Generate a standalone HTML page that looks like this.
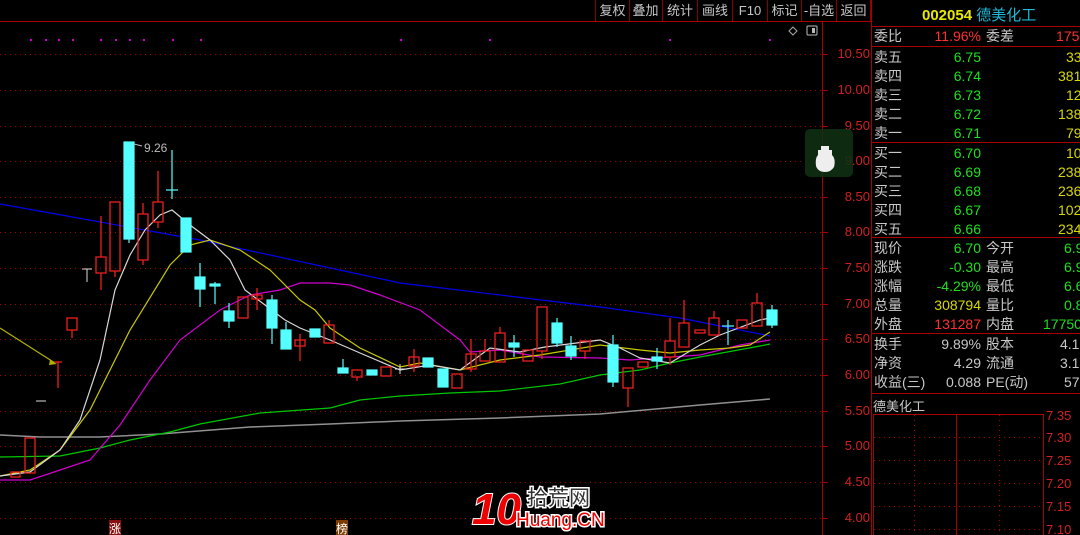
<!DOCTYPE html>
<html><head><meta charset="utf-8"><style>
body{margin:0;background:#000;width:1080px;height:535px;overflow:hidden;position:relative;font-family:"Liberation Sans","Noto Sans CJK SC",sans-serif}
.tb{position:absolute;top:0;height:21px;border-right:1px solid #800;color:#c8c8c8;font-size:13px;line-height:22px;text-align:center}
.ax{position:absolute;left:834px;color:#d02020;font-size:13px;width:36px;text-align:right}
.rp{position:absolute;left:871px;top:0;width:209px;height:535px;border-left:1px solid #a00;overflow:hidden}
.r{position:absolute;left:2px;height:19px;font-size:14px;line-height:19px;white-space:nowrap;width:300px}
.r span{position:absolute}
.l1{left:0;color:#c8c8c8}.v1{right:193px;text-align:right}.l2{left:112px;color:#c8c8c8}.v2{left:176px}
.hl{position:absolute;left:0;width:209px;height:1px;background:#a00}
.g{color:#1ee01e}.y{color:#d8d800}.rd{color:#ff3030}.w{color:#c8c8c8}
</style></head><body>
<div style="position:absolute;left:0;top:21px;width:871px;height:1px;background:#a00"></div>
<div class="tb" style="left:595px;width:33px;border-left:1px solid #800">复权</div>
<div class="tb" style="left:629px;width:33px">叠加</div>
<div class="tb" style="left:663px;width:34px">统计</div>
<div class="tb" style="left:698px;width:34px">画线</div>
<div class="tb" style="left:733px;width:34px">F10</div>
<div class="tb" style="left:768px;width:33px">标记</div>
<div class="tb" style="left:802px;width:34px">-自选</div>
<div class="tb" style="left:837px;width:33px">返回</div>
<div class="ax" style="top:46px">10.50</div><div class="ax" style="top:82px">10.00</div><div class="ax" style="top:118px">9.50</div><div class="ax" style="top:153px">9.00</div><div class="ax" style="top:189px">8.50</div><div class="ax" style="top:224px">8.00</div><div class="ax" style="top:260px">7.50</div><div class="ax" style="top:296px">7.00</div><div class="ax" style="top:331px">6.50</div><div class="ax" style="top:367px">6.00</div><div class="ax" style="top:403px">5.50</div><div class="ax" style="top:438px">5.00</div><div class="ax" style="top:474px">4.50</div><div class="ax" style="top:510px">4.00</div>
<svg width="871" height="535" style="position:absolute;left:0;top:0">
<g stroke="#a00000" stroke-dasharray="1 4" stroke-width="1">
<line x1="0" y1="54.5" x2="822" y2="54.5"/><line x1="0" y1="90.5" x2="822" y2="90.5"/><line x1="0" y1="126.5" x2="822" y2="126.5"/><line x1="0" y1="161.5" x2="822" y2="161.5"/><line x1="0" y1="197.5" x2="822" y2="197.5"/><line x1="0" y1="232.5" x2="822" y2="232.5"/><line x1="0" y1="268.5" x2="822" y2="268.5"/><line x1="0" y1="304.5" x2="822" y2="304.5"/><line x1="0" y1="339.5" x2="822" y2="339.5"/><line x1="0" y1="375.5" x2="822" y2="375.5"/><line x1="0" y1="411.5" x2="822" y2="411.5"/><line x1="0" y1="446.5" x2="822" y2="446.5"/><line x1="0" y1="482.5" x2="822" y2="482.5"/><line x1="0" y1="518.5" x2="822" y2="518.5"/>
</g>
<line x1="822.5" y1="22" x2="822.5" y2="535" stroke="#a00"/>
<g stroke="#a00"><line x1="822" y1="54.5" x2="828" y2="54.5"/><line x1="822" y1="90.5" x2="828" y2="90.5"/><line x1="822" y1="126.5" x2="828" y2="126.5"/><line x1="822" y1="161.5" x2="828" y2="161.5"/><line x1="822" y1="197.5" x2="828" y2="197.5"/><line x1="822" y1="232.5" x2="828" y2="232.5"/><line x1="822" y1="268.5" x2="828" y2="268.5"/><line x1="822" y1="304.5" x2="828" y2="304.5"/><line x1="822" y1="339.5" x2="828" y2="339.5"/><line x1="822" y1="375.5" x2="828" y2="375.5"/><line x1="822" y1="411.5" x2="828" y2="411.5"/><line x1="822" y1="446.5" x2="828" y2="446.5"/><line x1="822" y1="482.5" x2="828" y2="482.5"/><line x1="822" y1="518.5" x2="828" y2="518.5"/></g>
<g fill="#d000d0"><rect x="30" y="39" width="2" height="2"/><rect x="45" y="39" width="2" height="2"/><rect x="58" y="39" width="2" height="2"/><rect x="72" y="39" width="2" height="2"/><rect x="100" y="39" width="2" height="2"/><rect x="115" y="39" width="2" height="2"/><rect x="129" y="39" width="2" height="2"/><rect x="143" y="39" width="2" height="2"/><rect x="172" y="39" width="2" height="2"/><rect x="200" y="39" width="2" height="2"/><rect x="400" y="39" width="2" height="2"/><rect x="489" y="39" width="2" height="2"/><rect x="669" y="39" width="2" height="2"/><rect x="769" y="39" width="2" height="2"/></g>
<path d="M789 31l4-4 4 4-4 4z" stroke="#aaa" fill="none"/>
<rect x="807" y="26" width="10" height="9" rx="1" stroke="#bbb" fill="none"/><rect x="812" y="28" width="3" height="5" fill="#bbb"/>
<rect x="805" y="129" width="48" height="48" rx="5" fill="#0f3014" fill-opacity="0.9"/>
<path d="M818 150h14v5q4 4 2 12q-3 5-9 5q-7 0-9-6q-1-8 2-11z" fill="#eee"/><rect x="821" y="146" width="8" height="5" fill="#eee"/>
<g fill="none" stroke-width="1.2">
<polyline stroke="#0000ee" points="0,204 200,240 400,283 600,307 680,318 770,336"/>
<polyline stroke="#909090" stroke-width="1.5" points="0,435 40,437 100,437 160,434 250,427 330,424 400,421 500,418 600,414 700,405 770,399"/>
<polyline stroke="#00c800" points="0,457 60,456 100,448 130,440 170,432 200,424 260,413 330,408 360,400 400,396 450,393 500,391 560,384 600,375 640,370 670,363 700,357 760,346 770,344"/>
<polyline stroke="#d000d0" points="0,480 30,480 60,470 90,460 120,425 150,380 180,340 220,310 250,295 280,290 300,283 330,283 350,285 380,295 420,310 460,340 470,352 500,350 540,357 600,358 630,360 700,355 740,345 770,340"/>
<polyline stroke="#c8c800" points="0,476 30,470 60,450 90,410 130,330 170,265 190,245 210,240 240,250 270,270 300,300 315,310 330,328 360,348 400,367 420,363 460,370 500,360 540,355 600,345 640,350 670,353 700,350 730,348 750,345 770,332"/>
<polyline stroke="#d8d8d8" points="0,476 30,472 60,450 80,420 100,360 115,290 130,255 145,230 160,215 172,210 190,225 210,240 230,260 245,290 265,305 285,320 300,328 330,340 360,353 400,370 430,365 460,370 490,348 520,352 545,347 600,340 620,348 640,358 670,363 700,345 720,335 760,320 770,318"/>
<polyline stroke="#b0b000" points="0,328 55,363"/>
</g>
<path d="M50 360l7 4-8 1z" fill="#b0b000"/>
<g stroke="#ee2020" fill="none" stroke-width="1.3">
<rect x="11" y="472" width="9" height="5"/><rect x="25" y="438" width="10" height="35"/>
<line x1="58" y1="362" x2="58" y2="388"/><line x1="54" y1="362" x2="62" y2="362"/>
<rect x="67" y="318" width="10" height="12"/><line x1="72" y1="330" x2="72" y2="338"/>
<rect x="96" y="257" width="10" height="16"/><line x1="101" y1="216" x2="101" y2="257"/><line x1="101" y1="273" x2="101" y2="290"/>
<rect x="110" y="202" width="10" height="69"/><line x1="115" y1="271" x2="115" y2="277"/>
<rect x="138" y="214" width="10" height="46"/><line x1="143" y1="203" x2="143" y2="214"/><line x1="143" y1="260" x2="143" y2="265"/>
<rect x="153" y="202" width="10" height="20"/><line x1="158" y1="171" x2="158" y2="202"/><line x1="158" y1="222" x2="158" y2="228"/>
<rect x="238" y="297" width="10" height="21"/>
<rect x="252" y="295" width="10" height="4"/><line x1="257" y1="288" x2="257" y2="310"/>
<rect x="295" y="340" width="10" height="6"/><line x1="300" y1="334" x2="300" y2="361"/>
<rect x="324" y="325" width="10" height="18"/><line x1="329" y1="320" x2="329" y2="325"/>
<rect x="352" y="370" width="10" height="7"/><line x1="357" y1="377" x2="357" y2="381"/>
<rect x="381" y="367" width="10" height="9"/>
<rect x="409" y="357" width="10" height="9"/><line x1="414" y1="349" x2="414" y2="372"/>
<rect x="452" y="374" width="10" height="14"/>
<rect x="466" y="354" width="10" height="15"/><line x1="471" y1="339" x2="471" y2="372"/>
<rect x="480" y="351" width="10" height="10"/><line x1="485" y1="339" x2="485" y2="351"/>
<rect x="495" y="333" width="10" height="29"/><line x1="500" y1="327" x2="500" y2="333"/>
<rect x="523" y="350" width="10" height="11"/>
<rect x="537" y="307" width="10" height="44"/><line x1="542" y1="351" x2="542" y2="359"/>
<rect x="580" y="341" width="10" height="10"/><line x1="585" y1="351" x2="585" y2="359"/>
<rect x="623" y="368" width="10" height="20"/><line x1="628" y1="388" x2="628" y2="407"/>
<rect x="638" y="362" width="10" height="5"/>
<rect x="665" y="341" width="10" height="16"/><line x1="670" y1="318" x2="670" y2="341"/><line x1="670" y1="357" x2="670" y2="365"/>
<rect x="679" y="323" width="10" height="24"/><line x1="684" y1="300" x2="684" y2="323"/>
<rect x="695" y="330" width="10" height="3"/>
<rect x="709" y="318" width="10" height="17"/><line x1="714" y1="311" x2="714" y2="318"/>
<rect x="737" y="320" width="10" height="8"/>
<rect x="752" y="303" width="10" height="23"/><line x1="757" y1="293" x2="757" y2="303"/>
</g>
<g fill="#5ff" stroke="#5ff" stroke-width="1.2">
<rect x="124" y="142" width="10" height="97"/><line x1="129" y1="239" x2="129" y2="243"/>
<line x1="166" y1="190" x2="178" y2="190"/><line x1="172" y1="150" x2="172" y2="199"/>
<rect x="181" y="218" width="10" height="34"/>
<rect x="195" y="277" width="10" height="12"/><line x1="200" y1="263" x2="200" y2="307"/>
<rect x="210" y="284" width="10" height="2"/><line x1="215" y1="282" x2="215" y2="304"/>
<rect x="224" y="311" width="10" height="10"/><line x1="229" y1="303" x2="229" y2="328"/>
<rect x="267" y="300" width="10" height="28"/><line x1="272" y1="295" x2="272" y2="344"/>
<rect x="281" y="330" width="10" height="19"/><line x1="286" y1="322" x2="286" y2="330"/>
<rect x="310" y="329" width="10" height="8"/>
<rect x="338" y="368" width="10" height="5"/><line x1="343" y1="359" x2="343" y2="368"/>
<rect x="367" y="370" width="10" height="5"/>
<rect x="423" y="358" width="10" height="9"/>
<rect x="438" y="369" width="10" height="18"/>
<rect x="509" y="343" width="10" height="4"/><line x1="514" y1="335" x2="514" y2="357"/>
<rect x="552" y="323" width="10" height="20"/><line x1="557" y1="318" x2="557" y2="347"/>
<rect x="566" y="346" width="10" height="10"/><line x1="571" y1="336" x2="571" y2="360"/>
<rect x="608" y="345" width="10" height="37"/><line x1="613" y1="335" x2="613" y2="387"/>
<rect x="652" y="357" width="10" height="4"/><line x1="657" y1="348" x2="657" y2="369"/>
<line x1="722" y1="326" x2="734" y2="326"/><line x1="728" y1="320" x2="728" y2="345"/>
<rect x="767" y="310" width="10" height="15"/><line x1="772" y1="305" x2="772" y2="328"/>
</g>
<g stroke="#ddd"><line x1="36" y1="401" x2="46" y2="401"/><line x1="82" y1="269" x2="92" y2="269"/><line x1="87" y1="269" x2="87" y2="282"/><line x1="395" y1="369" x2="405" y2="369"/><line x1="400" y1="364" x2="400" y2="374"/></g>
<text x="144" y="152" fill="#bbb" font-size="12" font-family="Liberation Sans">9.26</text>
<line x1="134" y1="144" x2="142" y2="146" stroke="#bbb"/>
<rect x="109" y="520" width="12" height="15" fill="#8a1010"/><text x="109" y="533" fill="#fff" font-size="12" font-family="Noto Sans CJK SC">涨</text>
<rect x="336" y="520" width="12" height="15" fill="#7a3a00"/><text x="336" y="533" fill="#fff" font-size="12" font-family="Noto Sans CJK SC">榜</text>
<text x="472" y="524" fill="#e00" stroke="#fff" stroke-width="2" paint-order="stroke" font-size="44" font-weight="bold" font-style="italic" font-family="Liberation Sans">10</text>
<text x="527" y="505" fill="#333" stroke="#fff" stroke-width="3" paint-order="stroke" font-size="21" font-family="Noto Sans CJK SC">拾荒网</text>
<text x="516" y="526" fill="#e00" stroke="#fff" stroke-width="3" paint-order="stroke" font-size="19" font-family="Liberation Sans">Huang.CN</text>
</svg>
<div class="rp">
<div style="position:absolute;left:50px;top:4px;font-size:15px;white-space:nowrap"><b style="color:#e8e800">002054</b> <span style="color:#20b8d8">德美化工</span></div>
<div class="hl" style="top:26px"></div>
<div class="r" style="top:27px"><span class="l1">委比</span><span class="v1 rd">11.96%</span><span class="l2">委差</span><span class="v2 rd" style="left:182px">175</span></div>
<div class="hl" style="top:46px"></div>
<div class="r" style="top:48px"><span class="l1">卖五</span><span class="v1 g">6.75</span><span class="v2 y" style="left:192px">33</span></div>
<div class="r" style="top:67px"><span class="l1">卖四</span><span class="v1 g">6.74</span><span class="v2 y" style="left:184px">381</span></div>
<div class="r" style="top:86px"><span class="l1">卖三</span><span class="v1 g">6.73</span><span class="v2 y" style="left:192px">12</span></div>
<div class="r" style="top:105px"><span class="l1">卖二</span><span class="v1 g">6.72</span><span class="v2 y" style="left:184px">138</span></div>
<div class="r" style="top:124px"><span class="l1">卖一</span><span class="v1 g">6.71</span><span class="v2 y" style="left:192px">79</span></div>
<div class="hl" style="top:142px"></div>
<div class="r" style="top:144px"><span class="l1">买一</span><span class="v1 g">6.70</span><span class="v2 y" style="left:192px">10</span></div>
<div class="r" style="top:163px"><span class="l1">买二</span><span class="v1 g">6.69</span><span class="v2 y" style="left:184px">238</span></div>
<div class="r" style="top:182px"><span class="l1">买三</span><span class="v1 g">6.68</span><span class="v2 y" style="left:184px">236</span></div>
<div class="r" style="top:201px"><span class="l1">买四</span><span class="v1 g">6.67</span><span class="v2 y" style="left:184px">102</span></div>
<div class="r" style="top:220px"><span class="l1">买五</span><span class="v1 g">6.66</span><span class="v2 y" style="left:184px">234</span></div>
<div class="hl" style="top:237px"></div>
<div class="r" style="top:239px"><span class="l1">现价</span><span class="v1 g">6.70</span><span class="l2">今开</span><span class="v2 g" style="left:190px">6.9</span></div>
<div class="r" style="top:258px"><span class="l1">涨跌</span><span class="v1 g">-0.30</span><span class="l2">最高</span><span class="v2 g" style="left:190px">6.9</span></div>
<div class="r" style="top:277px"><span class="l1">涨幅</span><span class="v1 g">-4.29%</span><span class="l2">最低</span><span class="v2 g" style="left:190px">6.6</span></div>
<div class="r" style="top:296px"><span class="l1">总量</span><span class="v1 y">308794</span><span class="l2">量比</span><span class="v2 g" style="left:190px">0.8</span></div>
<div class="r" style="top:315px"><span class="l1">外盘</span><span class="v1 rd">131287</span><span class="l2">内盘</span><span class="v2 g" style="left:169px">17750</span></div>
<div class="hl" style="top:333px"></div>
<div class="r" style="top:335px"><span class="l1">换手</span><span class="v1 w">9.89%</span><span class="l2">股本</span><span class="v2 w" style="left:186px">4.19亿</span></div>
<div class="r" style="top:354px"><span class="l1">净资</span><span class="v1 w">4.29</span><span class="l2">流通</span><span class="v2 w" style="left:186px">3.12亿</span></div>
<div class="r" style="top:373px"><span class="l1">收益(三)</span><span class="v1 w">0.088</span><span class="l2">PE(动)</span><span class="v2 w" style="left:190px">57.</span></div>
<div class="hl" style="top:393px"></div>
<div style="position:absolute;left:1px;top:396px;color:#c8c8c8;font-size:13px">德美化工</div>
<svg width="209" height="125" style="position:absolute;left:0;top:410px">
<rect x="1.5" y="4.5" width="170" height="125" fill="none" stroke="#a00"/>
<line x1="84.5" y1="4" x2="84.5" y2="125" stroke="#a00"/>
<g stroke="#a00" stroke-dasharray="1 4"><line x1="2" y1="27.5" x2="171" y2="27.5"/><line x1="2" y1="50.5" x2="171" y2="50.5"/><line x1="2" y1="73.5" x2="171" y2="73.5"/><line x1="2" y1="96.5" x2="171" y2="96.5"/><line x1="2" y1="119.5" x2="171" y2="119.5"/><line x1="42.5" y1="5" x2="42.5" y2="125"/><line x1="127.5" y1="5" x2="127.5" y2="125"/></g>
<g fill="#d02020" font-size="13" font-family="Liberation Sans"><text x="174" y="10">7.35</text><text x="174" y="32">7.30</text><text x="174" y="55">7.25</text><text x="174" y="78">7.20</text><text x="174" y="101">7.15</text><text x="174" y="124">7.10</text></g>
</svg>
</div>
</body></html>
